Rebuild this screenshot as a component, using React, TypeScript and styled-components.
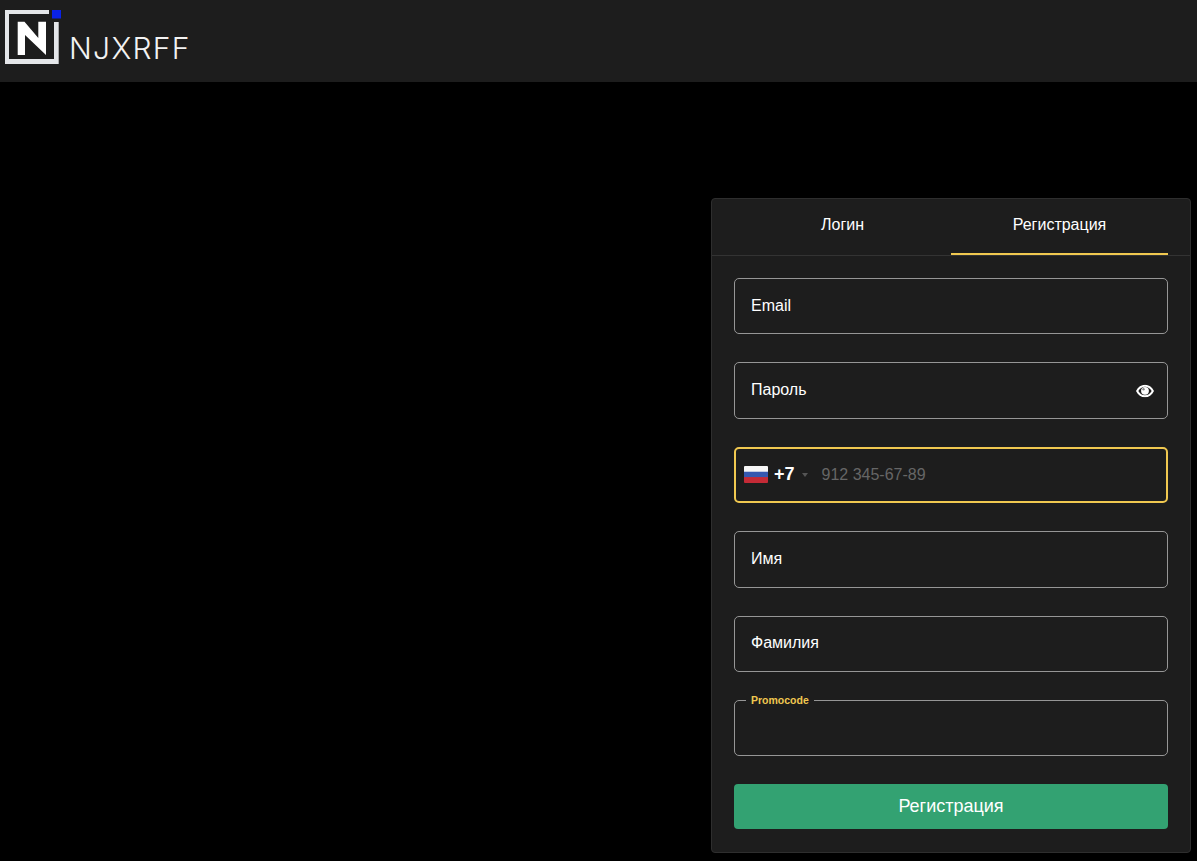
import React from "react";
import styled, { createGlobalStyle } from "styled-components";

const GlobalStyle = createGlobalStyle`
  html, body {
    margin: 0;
    padding: 0;
    background: #000;
    font-family: "Liberation Sans", Arial, sans-serif;
  }
  * {
    box-sizing: border-box;
  }
`;

const color = {
  panel: "#1d1d1d",
  line: "#969696",
  divider: "#333333",
  gold: "#f0c850",
  green: "#33a272",
  white: "#ffffff",
};

const Page = styled.div`
  width: 1197px;
  height: 861px;
  overflow: hidden;
  background: #000;
`;

const Header = styled.header`
  height: 82px;
  background: ${color.panel};
  display: flex;
  align-items: flex-start;
  padding: 8px 0 0 5px;
`;

const LogoMark = styled.svg`
  width: 57px;
  height: 56px;
  flex-shrink: 0;
`;

const LogoText = styled.span`
  margin: 22px 0 0 7px;
  font-family: "Inter", sans-serif;
  font-size: 30px;
  line-height: 36px;
  font-weight: 300;
  letter-spacing: 1.3px;
  color: #f2f2f2;
`;

const Main = styled.main`
  display: flex;
  justify-content: flex-end;
  padding: 116px 6px 0 0;
`;

const Card = styled.section`
  width: 480px;
  height: 655px;
  background: ${color.panel};
  border: 1px solid #2e2e2e;
  border-radius: 4px;
`;

const Tabs = styled.div`
  display: flex;
  height: 57px;
  padding: 0 22px;
  border-bottom: 1px solid ${color.divider};
`;

const Tab = styled.button<{ $active?: boolean }>`
  flex: 1;
  height: 56px;
  padding: 0 0 3px;
  background: none;
  border: 0;
  border-bottom: 2px solid ${(p) => (p.$active ? color.gold : "transparent")};
  color: ${color.white};
  font: 400 16px "Liberation Sans", Arial, sans-serif;
`;

const Form = styled.form`
  display: flex;
  flex-direction: column;
  gap: 28px;
  padding: 22px 22px 0;
`;

const Field = styled.div<{ $focused?: boolean }>`
  position: relative;
  height: 56.4px;
  display: flex;
  align-items: center;
  padding: 0 16px 1px;
  border: ${(p) => (p.$focused ? `2px solid ${color.gold}` : `1px solid ${color.line}`)};
  border-radius: 5px;
`;

const Label = styled.span`
  color: ${color.white};
  font-size: 16px;
`;

const EyeButton = styled.span`
  position: absolute;
  right: 13px;
  top: 50%;
  transform: translateY(-50%);
  display: flex;
`;

const PhoneField = styled(Field)`
  padding: 0 0 0 8px;
`;

const Flag = styled.span`
  width: 24px;
  height: 17px;
  border-radius: 1px;
  background: linear-gradient(#f6f6f6 0 31%, #3558b0 36% 63%, #c42a36 68% 100%);
`;

const DialCode = styled.span`
  margin-left: 6px;
  color: ${color.white};
  font-size: 18px;
  font-weight: 700;
`;

const Caret = styled.span`
  margin-left: 7px;
  width: 0;
  height: 0;
  border-left: 3px solid transparent;
  border-right: 3px solid transparent;
  border-top: 4px solid #555;
`;

const Placeholder = styled.span`
  margin-left: 14px;
  color: #666666;
  font-size: 16px;
`;

const FloatingLabel = styled.span`
  position: absolute;
  left: 11px;
  top: -7px;
  padding: 0 5px;
  background: ${color.panel};
  color: ${color.gold};
  font-size: 10.5px;
  font-weight: 700;
  line-height: 12px;
`;

const SubmitButton = styled.button`
  height: 45px;
  background: ${color.green};
  border: 0;
  border-radius: 4px;
  color: ${color.white};
  font: 400 18px "Liberation Sans", Arial, sans-serif;
`;

export default function App() {
  return (
    <Page>
      <GlobalStyle />
      <Header>
        <LogoMark viewBox="0 0 57 56">
          <path d="M0 2H44V6H4V51H49V14H53.700V56H0Z" fill="#e4e6e9" />
          <rect x="47" y="2" width="9" height="8.500" fill="#0a22e8" />
          <path d="M12.700 13.700H19.500L33.300 30V13.700H41V47L20 27V47H12.700Z" fill="#ffffff" />
        </LogoMark>
        <LogoText>NJXRFF</LogoText>
      </Header>
      <Main>
        <Card>
          <Tabs>
            <Tab type="button">Логин</Tab>
            <Tab type="button" $active>
              Регистрация
            </Tab>
          </Tabs>
          <Form>
            <Field>
              <Label>Email</Label>
            </Field>
            <Field>
              <Label>Пароль</Label>
              <EyeButton>
                <svg width="18" height="13" viewBox="0 0 18 13">
                  <path
                    fillRule="evenodd"
                    d="M0 6.500C2 2.300 5.300 0.200 9 0.200s7 2.100 9 6.300c-2 4.200-5.300 6.300-9 6.300S2 10.700 0 6.500ZM2.300 6.500C3.800 9.200 6.200 10.800 9 10.800s5.200-1.600 6.700-4.300C14.200 3.800 11.800 2.200 9 2.200S3.800 3.800 2.300 6.500Z"
                    fill="#fff"
                  />
                  <circle cx="9" cy="6.300" r="3.900" fill="#fff" />
                  <circle cx="7.500" cy="4.700" r="1.200" fill="#888" />
                </svg>
              </EyeButton>
            </Field>
            <PhoneField $focused>
              <Flag />
              <DialCode>+7</DialCode>
              <Caret />
              <Placeholder>912 345-67-89</Placeholder>
            </PhoneField>
            <Field>
              <Label>Имя</Label>
            </Field>
            <Field>
              <Label>Фамилия</Label>
            </Field>
            <Field>
              <FloatingLabel>Promocode</FloatingLabel>
            </Field>
            <SubmitButton type="button">Регистрация</SubmitButton>
          </Form>
        </Card>
      </Main>
    </Page>
  );
}
